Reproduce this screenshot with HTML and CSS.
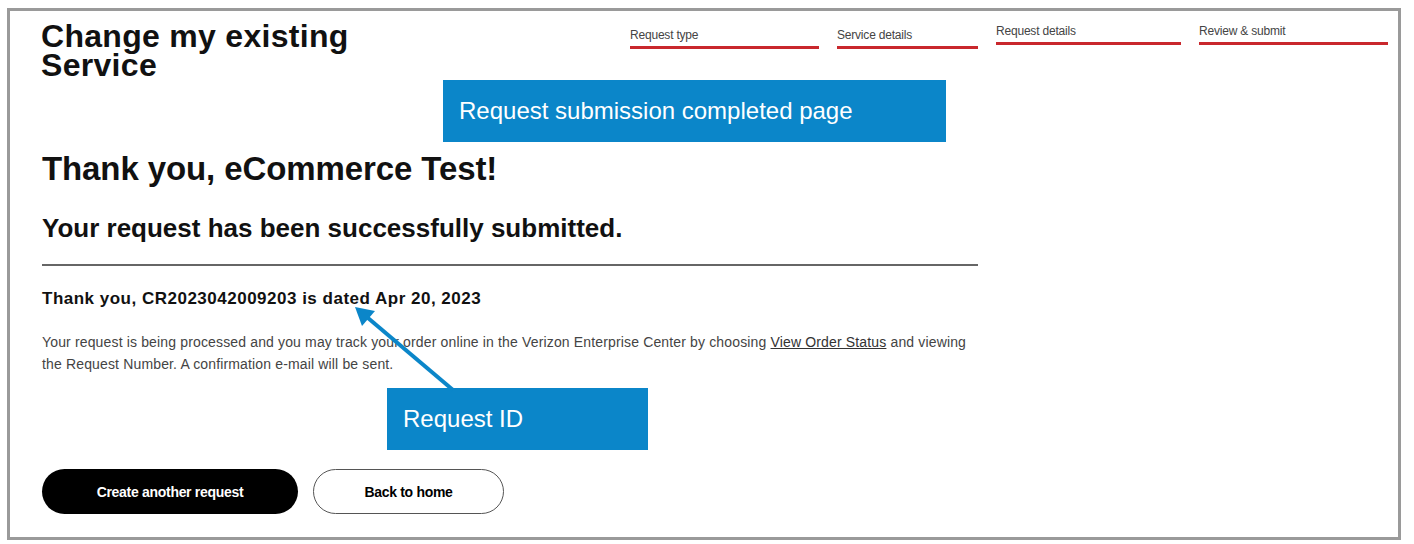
FILE: index.html
```html
<!DOCTYPE html>
<html lang="en">
<head>
  <meta charset="UTF-8" />
  <meta name="viewport" content="width=device-width, initial-scale=1.0"/>
  <title>Change my existing Service - Request submitted</title>
  <link rel="stylesheet" href="styles.css">
</head>
<body>

  <div class="frame">

    <header class="page-header">
      <h1>Change my existing<br>Service</h1>
      <ol class="steps">
        <li class="step">Request type</li>
        <li class="step step-mid">Service details</li>
        <li class="step step-wide step-up">Request details</li>
        <li class="step step-up">Review &amp; submit</li>
      </ol>
    </header>

    <section class="confirmation">
      <h2 class="thanks">Thank you, eCommerce Test!</h2>
      <h3 class="submitted">Your request has been successfully submitted.</h3>
      <hr class="divider">
      <p class="request-id">Thank you, CR2023042009203 is dated Apr 20, 2023</p>
      <p class="note">
        Your request is being processed and you may track your order online in the Verizon Enterprise Center by choosing <a href="#">View Order Status</a> and viewing
        the Request Number. A confirmation e-mail will be sent.
      </p>
      <div class="actions">
        <button class="btn btn-dark">Create another request</button>
        <button class="btn btn-outline">Back to home</button>
      </div>
    </section>

    <!-- annotations drawn over the screenshot -->
    <div class="callout callout-page">Request submission completed page</div>
    <div class="callout callout-id">Request ID</div>
    <svg class="arrow" width="1388" height="526" viewBox="0 0 1388 526">
      <line x1="443" y1="379" x2="358" y2="307" stroke="#0b86c9" stroke-width="4"/>
      <polygon points="345,296 365,300 352,315" fill="#0b86c9"/>
    </svg>

  </div>

</body>
</html>
```

FILE: styles.css
```css
body {
  margin: 0;
  padding: 0;
  background-color: #fff;
  font-family: "Liberation Sans", Arial, sans-serif;
  color: #000;
}

.frame {
  position: relative;
  box-sizing: border-box;
  width: 1394px;
  height: 532px;
  margin: 8px 0 0 7px;
  border: 3px solid #9a9a9a;
  background-color: #fff;
}

.page-header {
  display: flex;
  align-items: flex-start;
  padding: 11px 0 0 31px;
}

.page-header h1 {
  margin: 0;
  font-size: 32px;
  line-height: 29px;
  font-weight: bold;
  letter-spacing: 0.3px;
  color: #111;
}

.steps {
  display: flex;
  align-items: flex-start;
  gap: 18px;
  list-style: none;
  margin: 5px 0 0 auto;
  padding: 0 10px 0 0;
}

.step {
  width: 189px;
  padding-bottom: 3px;
  border-bottom: 3px solid #c9282d;
  font-size: 12px;
  line-height: 16px;
  color: #444;
  letter-spacing: -0.2px;
}

.step-mid {
  width: 141px;
}

.step-wide {
  width: 185px;
}

.step-up {
  margin-top: -4px;
}

.confirmation {
  padding: 0 0 0 32px;
  width: 936px;
}

.thanks {
  margin: 69px 0 0;
  font-size: 33px;
  line-height: 40px;
  font-weight: bold;
  letter-spacing: -0.1px;
  color: #111;
}

.submitted {
  margin: 23px 0 0;
  font-size: 26px;
  line-height: 32px;
  font-weight: bold;
  letter-spacing: 0;
  color: #111;
}

.divider {
  margin: 20px 0 0;
  border: none;
  border-top: 2px solid #666;
}

.request-id {
  margin: 22px 0 0;
  font-size: 17px;
  line-height: 22px;
  font-weight: bold;
  letter-spacing: 0.5px;
  color: #111;
}

.note {
  margin: 21px 0 0;
  font-size: 14px;
  line-height: 22px;
  letter-spacing: 0.15px;
  color: #444;
}

.note a {
  color: #333;
  text-decoration: underline;
}

.actions {
  display: flex;
  gap: 15px;
  margin-top: 94px;
}

.btn {
  height: 45px;
  border-radius: 23px;
  font-family: "Liberation Sans", Arial, sans-serif;
  font-size: 14px;
  font-weight: bold;
  letter-spacing: -0.3px;
  cursor: pointer;
}

.btn-dark {
  width: 256px;
  background-color: #000;
  color: #fff;
  border: none;
}

.btn-outline {
  width: 191px;
  background-color: #fff;
  color: #000;
  border: 1px solid #555;
}

.callout {
  position: absolute;
  box-sizing: border-box;
  height: 62px;
  padding-left: 16px;
  display: flex;
  align-items: center;
  background-color: #0b86c9;
  color: #fff;
  font-size: 24px;
}

.callout-page {
  left: 433px;
  top: 69px;
  width: 503px;
}

.callout-id {
  left: 377px;
  top: 377px;
  width: 261px;
}

.arrow {
  position: absolute;
  top: 0;
  left: 0;
  pointer-events: none;
}
```
